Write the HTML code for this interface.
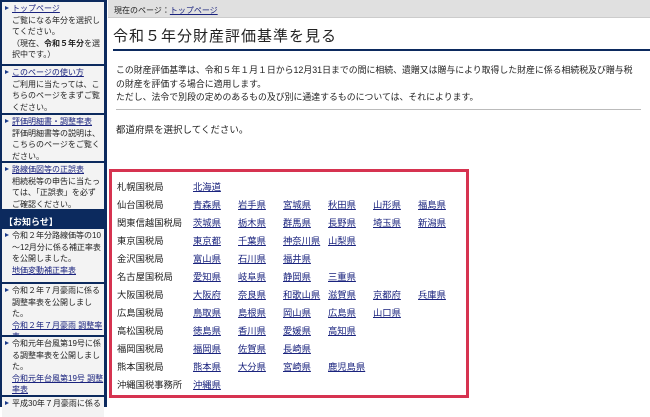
<!DOCTYPE html>
<html><head><meta charset="utf-8"><style>
*{margin:0;padding:0;box-sizing:border-box}
body{width:650px;height:407px;overflow:hidden;background:#fff;font-family:"Liberation Sans","Noto Sans CJK JP",sans-serif;font-size:10px;color:#222;position:relative}
a{color:#1a237e;text-decoration:underline}
#side{position:absolute;left:0;top:0;width:107px;height:407px;background:#0c2a5e}
.box{position:absolute;left:2px;width:102px;background:#f3f3f3;padding:1px 2px 0 10px;line-height:11.5px;font-size:8px;white-space:nowrap;overflow:hidden}
.box:before{content:"";position:absolute;left:3px;top:4px;border-left:4px solid #1a3a8a;border-top:2.5px solid transparent;border-bottom:2.5px solid transparent}
#notice{position:absolute;left:4px;top:215px;color:#fff;font-size:9px;font-weight:bold}
#crumb{position:absolute;left:108px;top:0;width:542px;height:18px;background:#e0e0e0;font-size:8px;padding:5px 0 0 6px;border-bottom:1px solid #ccc}
h1{position:absolute;left:113px;top:25px;width:537px;font-size:15px;font-weight:normal;border-bottom:2px solid #0c2a5e;padding-bottom:3px;letter-spacing:1px}
#desc{position:absolute;left:116px;top:64px;font-size:8.9px;line-height:13.5px;width:534px;white-space:nowrap}
hr{position:absolute;left:116px;top:109px;width:525px;border:0;border-top:1px solid #bbb}
#sel{position:absolute;left:116px;top:122px;font-size:9.5px}
#red{position:absolute;left:109px;top:169px;width:360px;height:229px;border:3px solid #d63350}
.row{position:absolute;left:117px;height:18px;font-size:9.3px}
.row span{position:absolute;top:0;white-space:nowrap}
</style></head><body>
<div id="side">
<div class="box" style="top:2px;height:62px"><a href="#">トップページ</a><br>ご覧になる年分を選択し<br>てください。<br>（現在、<b>令和５年分</b>を選<br>択中です。）</div>
<div class="box" style="top:66px;height:47px"><a href="#">このページの使い方</a><br>ご利用に当たっては、こ<br>ちらのページをまずご覧<br>ください。</div>
<div class="box" style="top:115px;height:46px"><a href="#">評価明細書・調整率表</a><br>評価明細書等の説明は、<br>こちらのページをご覧く<br>ださい。</div>
<div class="box" style="top:163px;height:46px"><a href="#">路線価図等の正誤表</a><br>相続税等の申告に当たっ<br>ては、「正誤表」を必ず<br>ご確認ください。</div>
<div id="notice">【お知らせ】</div>
<div class="box" style="top:229px;height:53px">令和２年分路線価等の10<br>～12月分に係る補正率表<br>を公開しました。<br><a href="#">地価変動補正率表</a></div>
<div class="box" style="top:284px;height:51px">令和２年７月豪雨に係る<br>調整率表を公開しまし<br>た。<br><a href="#">令和２年７月豪雨 調整率</a><br><a href="#">表</a></div>
<div class="box" style="top:337px;height:58px">令和元年台風第19号に係<br>る調整率表を公開しまし<br>た。<br><a href="#">令和元年台風第19号 調整</a><br><a href="#">率表</a></div>
<div class="box" style="top:397px;height:20px">平成30年７月豪雨に係る</div>
</div>
<div id="crumb">現在のページ：<a href="#">トップページ</a></div>
<h1>令和５年分財産評価基準を見る</h1>
<div id="desc">この財産評価基準は、令和５年１月１日から12月31日までの間に相続、遺贈又は贈与により取得した財産に係る相続税及び贈与税<br>の財産を評価する場合に適用します。<br>ただし、法令で別段の定めのあるもの及び別に通達するものについては、それによります。</div>
<hr>
<div id="sel">都道府県を選択してください。</div>
<div id="red"></div>
<div class="row" style="top:179px"><span style="left:0">札幌国税局</span><span style="left:76px"><a href="#">北海道</a></span></div>
<div class="row" style="top:197px"><span style="left:0">仙台国税局</span><span style="left:76px"><a href="#">青森県</a></span><span style="left:121px"><a href="#">岩手県</a></span><span style="left:166px"><a href="#">宮城県</a></span><span style="left:211px"><a href="#">秋田県</a></span><span style="left:256px"><a href="#">山形県</a></span><span style="left:301px"><a href="#">福島県</a></span></div>
<div class="row" style="top:215px"><span style="left:0">関東信越国税局</span><span style="left:76px"><a href="#">茨城県</a></span><span style="left:121px"><a href="#">栃木県</a></span><span style="left:166px"><a href="#">群馬県</a></span><span style="left:211px"><a href="#">長野県</a></span><span style="left:256px"><a href="#">埼玉県</a></span><span style="left:301px"><a href="#">新潟県</a></span></div>
<div class="row" style="top:233px"><span style="left:0">東京国税局</span><span style="left:76px"><a href="#">東京都</a></span><span style="left:121px"><a href="#">千葉県</a></span><span style="left:166px"><a href="#">神奈川県</a></span><span style="left:211px"><a href="#">山梨県</a></span></div>
<div class="row" style="top:251px"><span style="left:0">金沢国税局</span><span style="left:76px"><a href="#">富山県</a></span><span style="left:121px"><a href="#">石川県</a></span><span style="left:166px"><a href="#">福井県</a></span></div>
<div class="row" style="top:269px"><span style="left:0">名古屋国税局</span><span style="left:76px"><a href="#">愛知県</a></span><span style="left:121px"><a href="#">岐阜県</a></span><span style="left:166px"><a href="#">静岡県</a></span><span style="left:211px"><a href="#">三重県</a></span></div>
<div class="row" style="top:287px"><span style="left:0">大阪国税局</span><span style="left:76px"><a href="#">大阪府</a></span><span style="left:121px"><a href="#">奈良県</a></span><span style="left:166px"><a href="#">和歌山県</a></span><span style="left:211px"><a href="#">滋賀県</a></span><span style="left:256px"><a href="#">京都府</a></span><span style="left:301px"><a href="#">兵庫県</a></span></div>
<div class="row" style="top:305px"><span style="left:0">広島国税局</span><span style="left:76px"><a href="#">鳥取県</a></span><span style="left:121px"><a href="#">島根県</a></span><span style="left:166px"><a href="#">岡山県</a></span><span style="left:211px"><a href="#">広島県</a></span><span style="left:256px"><a href="#">山口県</a></span></div>
<div class="row" style="top:323px"><span style="left:0">高松国税局</span><span style="left:76px"><a href="#">徳島県</a></span><span style="left:121px"><a href="#">香川県</a></span><span style="left:166px"><a href="#">愛媛県</a></span><span style="left:211px"><a href="#">高知県</a></span></div>
<div class="row" style="top:341px"><span style="left:0">福岡国税局</span><span style="left:76px"><a href="#">福岡県</a></span><span style="left:121px"><a href="#">佐賀県</a></span><span style="left:166px"><a href="#">長崎県</a></span></div>
<div class="row" style="top:359px"><span style="left:0">熊本国税局</span><span style="left:76px"><a href="#">熊本県</a></span><span style="left:121px"><a href="#">大分県</a></span><span style="left:166px"><a href="#">宮崎県</a></span><span style="left:211px"><a href="#">鹿児島県</a></span></div>
<div class="row" style="top:377px"><span style="left:0">沖縄国税事務所</span><span style="left:76px"><a href="#">沖縄県</a></span></div>
</body></html>
